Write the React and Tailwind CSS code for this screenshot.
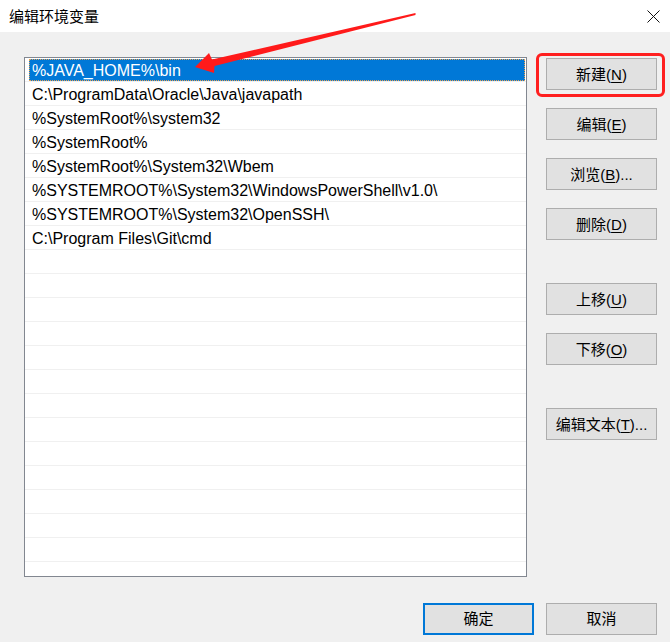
import React from 'react';

const paths = [
  '%JAVA_HOME%\\bin',
  'C:\\ProgramData\\Oracle\\Java\\javapath',
  '%SystemRoot%\\system32',
  '%SystemRoot%',
  '%SystemRoot%\\System32\\Wbem',
  '%SYSTEMROOT%\\System32\\WindowsPowerShell\\v1.0\\',
  '%SYSTEMROOT%\\System32\\OpenSSH\\',
  'C:\\Program Files\\Git\\cmd',
];

const rows = [...paths, ...Array(14).fill('')];

const font = { fontFamily: "'Liberation Sans', 'Noto Sans CJK SC', sans-serif" };

const Btn = ({ label, hot, tail = '', className = '' }) => (
  <button
    className={`h-[32px] w-[111px] bg-[#e1e1e1] border border-[#adadad] text-[15px] text-black leading-none flex items-center justify-center ${className}`}
  >
    <span>
      {label}
      {hot && (
        <>
          (<span className="underline underline-offset-2">{hot}</span>)
        </>
      )}
      {tail}
    </span>
  </button>
);

const App = () => {
  return (
    <div className="relative w-[670px] h-[642px] overflow-hidden flex flex-col bg-[#f0f0f0]" style={font}>
      {/* Title bar */}
      <div className="h-[32px] bg-white flex items-center justify-between pl-[9px] pr-[10px] shrink-0">
        <span className="text-[15px] text-black" style={{ fontFamily: "'Noto Sans CJK SC', sans-serif" }}>
          编辑环境变量
        </span>
        <svg width="13" height="13" viewBox="0 0 13 13">
          <line x1="0.5" y1="0.5" x2="12.5" y2="12.5" stroke="#111" strokeWidth="1" />
          <line x1="12.5" y1="0.5" x2="0.5" y2="12.5" stroke="#111" strokeWidth="1" />
        </svg>
      </div>

      {/* Body */}
      <div className="flex flex-col pt-[25px] pl-[24px]">
        <div className="flex">
          {/* Path list */}
          <div className="w-[503px] h-[520px] bg-white border border-[#828790] overflow-hidden">
            {rows.map((p, i) => (
              <div key={i} className="h-[24px] border-b border-[#f0f0f0] flex items-center">
                {i === 0 ? (
                  <div className="ml-[4px] mr-[1px] flex-1 h-[22px] bg-[#0078d7] outline-1 outline-dotted outline-[#e8a050] -outline-offset-1 flex items-center pl-[3px] pt-[3px] text-white text-[16px]">
                    {p}
                  </div>
                ) : (
                  <span className="pl-[7px] pt-[3px] text-[16px] text-black">{p}</span>
                )}
              </div>
            ))}
          </div>

          {/* Side buttons */}
          <div className="ml-[19px] mt-[1px] flex flex-col">
            <Btn label="新建" hot="N" />
            <Btn label="编辑" hot="E" className="mt-[18px]" />
            <Btn label="浏览" hot="B" tail="..." className="mt-[18px]" />
            <Btn label="删除" hot="D" className="mt-[18px]" />
            <Btn label="上移" hot="U" className="mt-[43px]" />
            <Btn label="下移" hot="O" className="mt-[18px]" />
            <Btn label="编辑文本" hot="T" tail="..." className="mt-[43px]" />
          </div>
        </div>

        {/* Footer buttons */}
        <div className="mt-[26px] flex justify-end gap-[12px] pr-[13px]">
          <button className="h-[32px] w-[111px] bg-[#e1e1e1] border-2 border-[#0078d7] text-[15px] text-black">确定</button>
          <button className="h-[32px] w-[111px] bg-[#e1e1e1] border border-[#adadad] text-[15px] text-black">取消</button>
        </div>
      </div>

      {/* Red annotation box */}
      <div className="absolute left-[536px] top-[53px] w-[129px] h-[44px] border-[3px] border-[#ff1f1f] rounded-[6px] pointer-events-none" />

      {/* Red annotation arrow */}
      <svg className="absolute inset-0 pointer-events-none" width="670" height="642" viewBox="0 0 670 642">
        <polygon
          points="195,67 209,53 212,59.5 415.5,13 415.5,15 214.5,66 214,73"
          fill="#ff1a1a"
        />
      </svg>
    </div>
  );
};

export default App;
